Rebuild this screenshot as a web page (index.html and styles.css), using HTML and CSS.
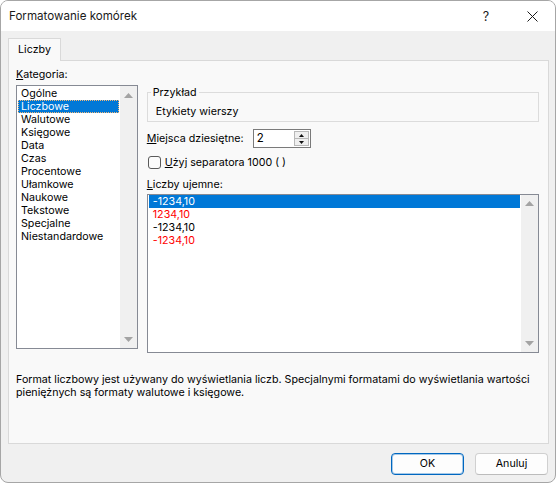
FILE: index.html
```html
<!DOCTYPE html>
<html lang="pl">
<head>
<meta charset="utf-8">
<title>Formatowanie komórek</title>
<link rel="stylesheet" href="styles.css">
</head>
<body>
<div class="dialog">
  <div class="titlebar">
    <span class="title">Formatowanie komórek</span>
    <span class="tb-btn help">?</span>
    <span class="tb-btn close">
      <svg width="11" height="11" viewBox="0 0 11 11"><path d="M0.5 0.5 L10.5 10.5 M10.5 0.5 L0.5 10.5" stroke="#1a1a1a" stroke-width="1" fill="none"/></svg>
    </span>
  </div>
  <div class="body">
    <div class="tabs"><div class="tab">Liczby</div></div>
    <div class="panel">
      <div class="cols">
        <div class="left">
          <div class="label"><u>K</u>ategoria:</div>
          <div class="listbox cat">
            <div class="items">
              <div class="item">Ogólne</div>
              <div class="item sel focus">Liczbowe</div>
              <div class="item">Walutowe</div>
              <div class="item">Księgowe</div>
              <div class="item">Data</div>
              <div class="item">Czas</div>
              <div class="item">Procentowe</div>
              <div class="item">Ułamkowe</div>
              <div class="item">Naukowe</div>
              <div class="item">Tekstowe</div>
              <div class="item">Specjalne</div>
              <div class="item">Niestandardowe</div>
            </div>
            <div class="scrollbar sb-cat">
              <svg class="arrow" width="9" height="5" viewBox="0 0 9 5"><path d="M4.5 0 L9 5 L0 5 Z" fill="#a3a3a3"/></svg>
              <svg class="arrow" width="9" height="5" viewBox="0 0 9 5"><path d="M0 0 L9 0 L4.5 5 Z" fill="#a3a3a3"/></svg>
            </div>
          </div>
        </div>
        <div class="right">
          <fieldset class="sample">
            <legend>Przykład</legend>
            <div class="sample-text">Etykiety wierszy</div>
          </fieldset>
          <div class="decimals">
            <span class="dec-label"><u>M</u>iejsca dziesiętne:</span>
            <div class="spin">
              <span class="spin-val">2</span>
              <div class="spin-btns">
                <span class="spin-b"><svg width="5" height="3" viewBox="0 0 5 3"><path d="M2.5 0 L5 3 L0 3 Z" fill="#111"/></svg></span>
                <span class="spin-b"><svg width="5" height="3" viewBox="0 0 5 3"><path d="M0 0 L5 0 L2.5 3 Z" fill="#111"/></svg></span>
              </div>
            </div>
          </div>
          <div class="check-row">
            <span class="checkbox"></span>
            <span><u>U</u>żyj separatora 1000 ( )</span>
          </div>
          <div class="label neg-label"><u>L</u>iczby ujemne:</div>
          <div class="listbox neg">
            <div class="items">
              <div class="item sel">-1234,10</div>
              <div class="item red">1234,10</div>
              <div class="item">-1234,10</div>
              <div class="item red">-1234,10</div>
            </div>
            <div class="scrollbar sb-neg">
              <svg class="arrow" width="9" height="5" viewBox="0 0 9 5"><path d="M4.5 0 L9 5 L0 5 Z" fill="#a3a3a3"/></svg>
              <svg class="arrow" width="9" height="5" viewBox="0 0 9 5"><path d="M0 0 L9 0 L4.5 5 Z" fill="#a3a3a3"/></svg>
            </div>
          </div>
        </div>
      </div>
      <p class="desc">Format liczbowy jest używany do wyświetlania liczb. Specjalnymi formatami do wyświetlania wartości<br>pieniężnych są formaty walutowe i księgowe.</p>
    </div>
    <div class="buttons">
      <button class="btn ok">OK</button>
      <button class="btn">Anuluj</button>
    </div>
  </div>
</div>
</body>
</html>
```
FILE: styles.css
```css
* { box-sizing: border-box; }
html, body { margin: 0; padding: 0; }
body {
  width: 556px;
  height: 484px;
  background: #ffffff;
  font-family: Inter, "Noto Sans", sans-serif;
  font-size: 10.7px;
  color: #000;
  overflow: hidden;
}
.dialog {
  width: 556px;
  height: 483px;
  border: 1px solid #a6a6a6;
  border-radius: 8px;
  background: #f0f0f0;
  overflow: hidden;
  display: flex;
  flex-direction: column;
}
.titlebar {
  height: 30px;
  background: #ffffff;
  display: flex;
  align-items: center;
  flex: none;
}
.title {
  flex: 1;
  padding-left: 8px;
  font-size: 11.6px;
  line-height: 16px;
  color: #1a1a1a;
}
.tb-btn {
  width: 46px;
  height: 30px;
  display: flex;
  align-items: center;
  justify-content: center;
  font-size: 12.5px;
  color: #1a1a1a;
}
.body {
  flex: 1;
  display: flex;
  flex-direction: column;
  padding: 7px 6px 0 7px;
}
.tabs {
  display: flex;
  height: 22px;
  flex: none;
}
.tab {
  position: relative;
  z-index: 1;
  width: 53px;
  height: 23px;
  margin-bottom: -1px;
  background: #f9f9f9;
  border: 1px solid #d9d9d9;
  border-bottom: none;
  display: flex;
  align-items: center;
  justify-content: center;
  padding-bottom: 2px;
}
.panel {
  height: 384px;
  flex: none;
  background: #f9f9f9;
  border: 1px solid #d9d9d9;
  padding: 7px 9px 0 7px;
}
.cols {
  display: flex;
  gap: 9px;
  align-items: flex-start;
}
.left {
  width: 122px;
  display: flex;
  flex-direction: column;
}
.label {
  line-height: 13px;
  height: 13px;
}
.listbox {
  display: flex;
  background: #ffffff;
  border: 1px solid #868a94;
}
.listbox.cat {
  margin-top: 4px;
  height: 264px;
}
.items {
  flex: 1;
  display: flex;
  flex-direction: column;
}
.cat .items { padding-top: 1px; }
.item {
  height: 13px;
  line-height: 13px;
  margin: 0 1px;
  padding-left: 3px;
  white-space: nowrap;
}
.neg .item { padding-left: 4px; }
.item.sel {
  background: #0078d7;
  color: #ffffff;
}
.item.focus {
  outline: 1px dotted #f2b878;
  outline-offset: -1px;
}
.item.red { color: #ff0000; }
.scrollbar {
  width: 17px;
  flex: none;
  background: #f0f0f0;
  display: flex;
  flex-direction: column;
  align-items: center;
  justify-content: space-between;
}
.sb-cat { padding: 7px 0 6px; }
.sb-neg { padding: 6px 0 6px; }
.arrow { display: block; }
.right {
  width: 393px;
  display: flex;
  flex-direction: column;
}
.sample {
  margin: 18px 0 0 0;
  padding: 0 8px 3px 3px;
  border: 1px solid #dcdcdc;
  min-width: 0;
}
.sample legend {
  padding: 0 2px;
  line-height: 13px;
}
.sample-text {
  margin-top: 6px;
  margin-left: 5px;
  line-height: 13px;
}
.decimals {
  margin-top: 7px;
  display: flex;
  align-items: center;
  height: 19px;
}
.dec-label {
  width: 106px;
  line-height: 13px;
}
.spin {
  width: 58px;
  height: 19px;
  border: 1px solid #7a7a7a;
  background: #ffffff;
  display: flex;
  align-items: stretch;
}
.spin-val {
  flex: 1;
  padding-left: 3px;
  line-height: 17px;
  font-size: 11.5px;
}
.spin-btns {
  width: 15px;
  margin: 1px 1px 1px 0;
  display: flex;
  flex-direction: column;
  border: 1px solid #b8b8b8;
  background: #efefef;
}
.spin-b {
  flex: 1;
  display: flex;
  align-items: center;
  justify-content: center;
}
.spin-b + .spin-b { border-top: 1px solid #b8b8b8; }
.spin-b svg { display: block; }
.check-row {
  margin-top: 8px;
  display: flex;
  align-items: center;
  gap: 4px;
  height: 13px;
  line-height: 13px;
}
.checkbox {
  width: 13px;
  height: 13px;
  margin-left: 1px;
  border: 1px solid #5a5a5a;
  border-radius: 3px;
  background: #fbfbfb;
  flex: none;
}
.neg-label { margin-top: 9px; }
.listbox.neg {
  margin-top: 3px;
  height: 159px;
}
.desc {
  margin: 20px 0 0 0;
  line-height: 13px;
  white-space: nowrap;
}
.buttons {
  display: flex;
  justify-content: flex-end;
  gap: 11px;
  margin-top: 9px;
  margin-right: 1px;
}
.btn {
  width: 73px;
  height: 22px;
  font-family: Inter, "Noto Sans", sans-serif;
  font-size: 10.7px;
  color: #000;
  background: #fdfdfd;
  border: 1px solid #d0d0d0;
  border-bottom-color: #bcbcbc;
  border-radius: 4px;
  padding: 0;
  line-height: 18px;
}
.btn.ok {
  border: 1px solid #0067c0;
  box-shadow: inset 0 0 0 1px rgba(0, 103, 192, 0.35);
}
```
